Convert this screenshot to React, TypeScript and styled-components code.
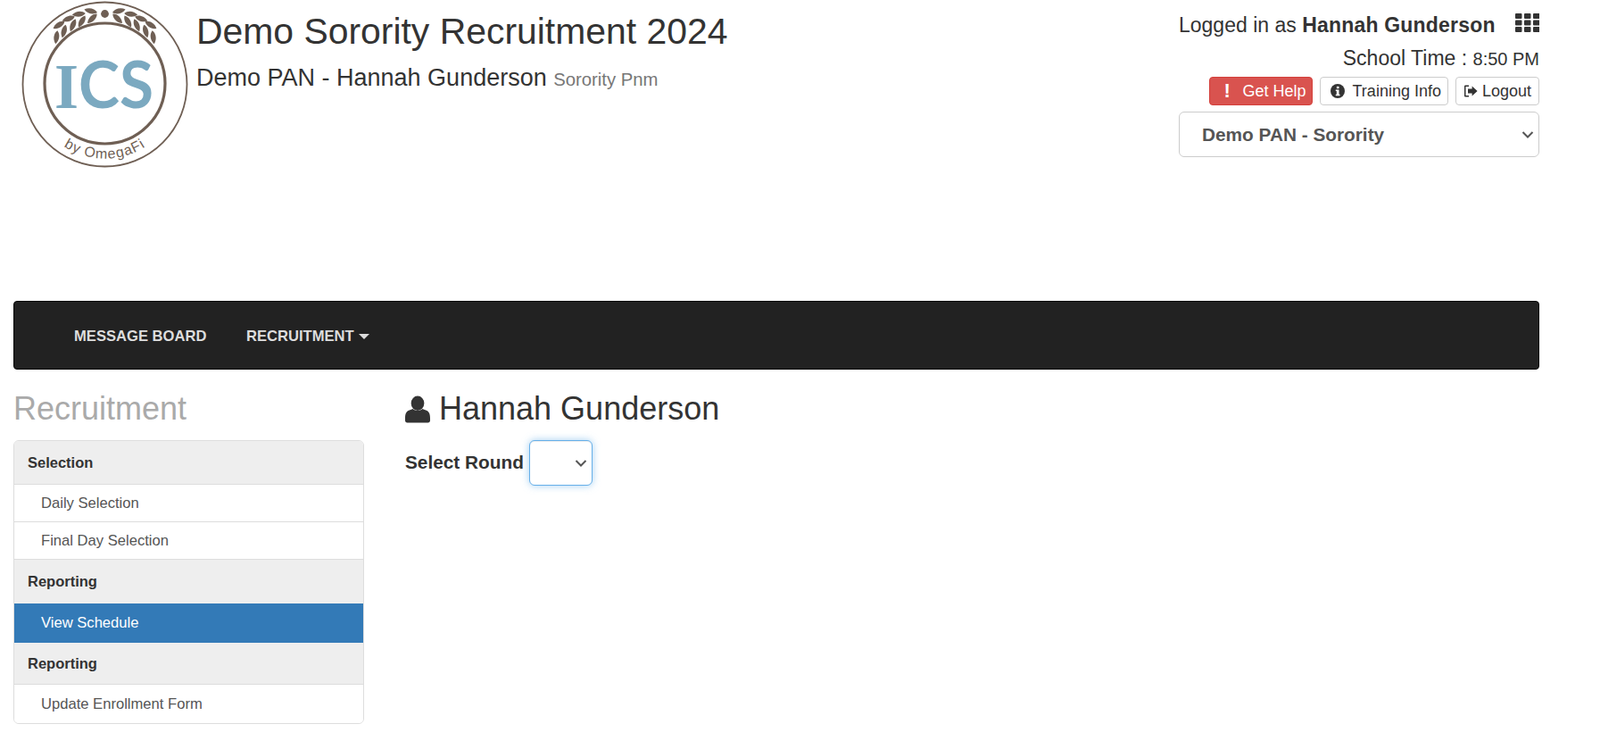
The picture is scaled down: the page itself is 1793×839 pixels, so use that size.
import styled, { createGlobalStyle } from "styled-components";

const GlobalStyle = createGlobalStyle`
  * { box-sizing: border-box; }
  body {
    margin: 0;
    background: #fff;
    color: #333;
    font-family: "Liberation Sans", Arial, sans-serif;
    font-size: 16px;
  }
`;

// one laurel leaf, centred on its middle
const LEAF = "M-7.500 0C-4-3.800 3-4 7.500 0 3 4-4 3.800-7.500 0z";

// x, y, rotation of the leaves on the right half, the left half is mirrored
const laurel = [
  [109.3, 11.3, -14],
  [122.7, 14.7, 6],
  [134.3, 20, 20],
  [145, 27, 32],
  [107.7, 19.7, 45],
  [119.3, 23, 60],
  [129.3, 27.3, 68],
  [139.3, 34, 75],
  [147.7, 40.7, 82],
];

const Logo = () => (
  <svg width="187" height="187" viewBox="0 0 187 187">
    <circle cx="93.5" cy="93.5" r="92" fill="none" stroke="#6f5f54" strokeWidth="1.8" />
    <circle cx="93.5" cy="92.5" r="67.5" fill="none" stroke="#6f5f54" strokeWidth="3.2" />
    <circle cx="93.5" cy="14.5" r="4.4" fill="#6f5f54" />
    <g fill="#6f5f54">
      {laurel.map(([x, y, r]) => (
        <g key={`${x}-${y}`}>
          <path d={LEAF} transform={`translate(${x} ${y}) rotate(${r})`} />
          <path d={LEAF} transform={`translate(${187 - x} ${y}) scale(-1 1) rotate(${r})`} />
        </g>
      ))}
    </g>
    <text x="37" y="120" fontSize="72" fontWeight="700" fill="#7ba9c0" textLength="111" lengthAdjust="spacingAndGlyphs">
      <tspan fontFamily="'Liberation Serif', serif">I</tspan>
      <tspan fontFamily="Lato, 'Liberation Sans', sans-serif">CS</tspan>
    </text>
    <path id="logoArc" d="M29.500 147A84 84 0 0 0 157.500 147" fill="none" />
    <text fontFamily="'Liberation Sans', sans-serif" fontSize="16" fill="#6f5f54" letterSpacing="1">
      <textPath href="#logoArc" startOffset="50%" textAnchor="middle">by OmegaFi</textPath>
    </text>
  </svg>
);

const GridIcon = () => (
  <svg width="27" height="21" viewBox="0 0 27 21" fill="#333">
    {[0, 7.5, 15].map((y) =>
      [0, 10, 20].map((x) => <rect key={`${x}-${y}`} x={x} y={y} width="7.5" height="6" rx="1" />)
    )}
  </svg>
);

const InfoIcon = () => (
  <svg width="16" height="16" viewBox="0 0 16 16">
    <circle cx="8" cy="8" r="8" fill="#333" />
    <rect x="6.9" y="2.8" width="2.6" height="2.4" fill="#fff" />
    <path d="M5.8 6.6h3.7v5.2h1v1.4H5.8v-1.4h1V8h-1z" fill="#fff" />
  </svg>
);

const LogoutIcon = () => (
  <svg width="16" height="14" viewBox="0 0 16 14" fill="#333">
    <path d="M1 1.6C1 .8 1.6.4 2.3.4H6v1.5H2.8c-.2 0-.3.1-.3.3v9.6c0 .2.1.3.3.3H6v1.5H2.3c-.7 0-1.3-.5-1.3-1.2z" />
    <path d="M5 4.6h4.6V1.4L15.6 7l-6 5.6V9.4H5z" />
  </svg>
);

const UserIcon = () => (
  <svg width="28" height="31" viewBox="0 0 29 31" fill="#333">
    <ellipse cx="14.5" cy="8.5" rx="7.6" ry="8.5" />
    <path d="M0 26c0-5 1-8 5-9.500l4-1.500c3 2.800 8 2.800 11 0l4 1.500c4 1.500 5 4.500 5 9.500v2.500c0 1.500-1 2.500-2.500 2.500h-24C1 31 0 30 0 28.500z" />
  </svg>
);

const Chevron = () => (
  <ChevronMark width="14" height="8" viewBox="0 0 14 8">
    <path d="M1.500 1l5.500 5.500L12.500 1" fill="none" stroke="#555" strokeWidth="2" />
  </ChevronMark>
);

const App = () => (
  <Page>
    <GlobalStyle />
    <Header>
      <LogoWrap>
        <Logo />
      </LogoWrap>
      <Titles>
        <Title>Demo Sorority Recruitment 2024</Title>
        <Subtitle>
          Demo PAN - Hannah Gunderson <small>Sorority Pnm</small>
        </Subtitle>
      </Titles>
      <Account>
        <LoggedRow>
          <span>
            Logged in as <b>Hannah Gunderson</b>
          </span>
          <GridIcon />
        </LoggedRow>
        <SchoolTime>
          School Time : <small>8:50 PM</small>
        </SchoolTime>
        <Buttons>
          <HelpButton>
            <Bang>!</Bang>
            Get Help
          </HelpButton>
          <ToolButton $gap={9} $left={11} $right={7}>
            <InfoIcon />
            Training Info
          </ToolButton>
          <ToolButton $gap={5} $left={8} $right={8}>
            <LogoutIcon />
            Logout
          </ToolButton>
        </Buttons>
        <SelectBox>
          <ChapterSelect defaultValue="demo">
            <option value="demo">Demo PAN - Sorority</option>
          </ChapterSelect>
          <Chevron />
        </SelectBox>
      </Account>
    </Header>

    <Navbar>
      <NavLink>MESSAGE BOARD</NavLink>
      <NavLink>
        RECRUITMENT <Caret />
      </NavLink>
    </Navbar>

    <Columns>
      <Sidebar>
        <SideTitle>Recruitment</SideTitle>
        <Menu>
          <MenuHeading $height={49}>Selection</MenuHeading>
          <MenuItem $height={42}>Daily Selection</MenuItem>
          <MenuItem $height={42}>Final Day Selection</MenuItem>
          <MenuHeading $height={50}>Reporting</MenuHeading>
          <MenuItem $height={44} $active>View Schedule</MenuItem>
          <MenuHeading $height={47}>Reporting</MenuHeading>
          <MenuItem $height={43} $last>Update Enrollment Form</MenuItem>
        </Menu>
      </Sidebar>
      <Main>
        <PersonName>
          <UserIcon />
          Hannah Gunderson
        </PersonName>
        <RoundRow>
          <RoundLabel>Select Round</RoundLabel>
          <SelectBox>
            <RoundSelect />
            <Chevron />
          </SelectBox>
        </RoundRow>
      </Main>
    </Columns>
  </Page>
);

export default App;

const Page = styled.div`
  width: 100%;
  min-height: 839px;
  padding: 0 68px 0 15px;
`;

const Header = styled.header`
  display: flex;
  height: 337px;
`;

const LogoWrap = styled.div`
  width: 205px;
  padding: 1px 0 0 9px;
  flex: none;
`;

const Titles = styled.div`
  flex: 1;
  padding-top: 13px;
`;

const Title = styled.h1`
  margin: 0;
  font-size: 40.900px;
  line-height: 44px;
  font-weight: 400;
`;

const Subtitle = styled.h3`
  margin: 15px 0 0;
  font-size: 27px;
  line-height: 30px;
  font-weight: 400;

  small {
    font-size: 20.300px;
    color: #777;
  }
`;

const Account = styled.div`
  width: 404px;
  flex: none;
`;

const LoggedRow = styled.div`
  display: flex;
  justify-content: space-between;
  align-items: flex-start;
  height: 46px;
  padding-top: 15px;
  font-size: 23px;
  line-height: 26px;

  b {
    letter-spacing: 0.2px;
  }
`;

const SchoolTime = styled.div`
  text-align: right;
  font-size: 23px;
  line-height: 26px;
  height: 40px;
  padding-top: 6px;

  small {
    font-size: 20px;
  }
`;

const Buttons = styled.div`
  display: flex;
  justify-content: flex-end;
  gap: 8px;
`;

const HelpButton = styled.button`
  display: flex;
  align-items: center;
  height: 32px;
  width: 116px;
  padding: 0 0 0 14px;
  border: 1px solid #d43f3a;
  border-radius: 4px;
  background: #d9534f;
  color: #fff;
  font-family: inherit;
  font-size: 18px;
`;

const Bang = styled.span`
  width: 11px;
  margin-right: 12px;
  text-align: center;
  font-weight: 700;
  font-size: 22px;
`;

const ToolButton = styled.button<{ $gap: number; $left: number; $right: number }>`
  display: flex;
  align-items: center;
  gap: ${(p) => p.$gap}px;
  height: 32px;
  padding: 0 ${(p) => p.$right}px 0 ${(p) => p.$left}px;
  border: 1px solid #ccc;
  border-radius: 4px;
  background: #fff;
  color: #333;
  font-family: inherit;
  font-size: 18px;
`;

const SelectBox = styled.div`
  position: relative;
  display: block;
`;

const ChevronMark = styled.svg`
  position: absolute;
  right: 6px;
  top: 50%;
  margin-top: -4px;
  pointer-events: none;
`;

const ChapterSelect = styled.select`
  display: block;
  appearance: none;
  width: 100%;
  height: 51px;
  margin-top: 7px;
  padding: 0 25px;
  border: 1px solid #ccc;
  border-radius: 6px;
  background: #fff;
  color: #555;
  font-family: inherit;
  font-size: 20.800px;
  font-weight: 700;
`;

const Navbar = styled.nav`
  display: flex;
  align-items: center;
  gap: 44.500px;
  height: 77px;
  padding: 2px 0 0 67px;
  border: 1px solid #080808;
  border-radius: 4px;
  background: #222;
`;

const NavLink = styled.a`
  color: #ddd;
  font-size: 16.600px;
  font-weight: 700;
`;

const Caret = styled.span`
  display: inline-block;
  margin-left: 1px;
  vertical-align: middle;
  border-top: 6px solid #ddd;
  border-left: 6px solid transparent;
  border-right: 6px solid transparent;
`;

const Columns = styled.div`
  display: flex;
  gap: 46px;
`;

const Sidebar = styled.aside`
  width: 393px;
  flex: none;
`;

const SideTitle = styled.h2`
  margin: 24px 0 0;
  height: 55px;
  font-size: 36px;
  line-height: 40px;
  font-weight: 400;
  color: #aaa;
`;

const Menu = styled.div`
  border: 1px solid #ddd;
  border-radius: 6px;
  overflow: hidden;
`;

const MenuHeading = styled.div<{ $height: number }>`
  height: ${(p) => p.$height}px;
  padding-left: 15px;
  display: flex;
  align-items: center;
  background: #eee;
  border-bottom: 1px solid #ddd;
  color: #333;
  font-size: 16.500px;
  font-weight: 700;
`;

const MenuItem = styled.a<{ $height: number; $active?: boolean; $last?: boolean }>`
  display: flex;
  align-items: center;
  height: ${(p) => p.$height}px;
  margin: ${(p) => (p.$active ? "-1px -1px 0" : "0")};
  padding-left: ${(p) => (p.$active ? 31 : 30)}px;
  background: ${(p) => (p.$active ? "#337ab7" : "#fff")};
  color: ${(p) => (p.$active ? "#fff" : "#555")};
  border-bottom: ${(p) => (p.$active || p.$last ? "none" : "1px solid #ddd")};
  font-size: 16.600px;
`;

const Main = styled.main`
  flex: 1;
`;

const PersonName = styled.h2`
  display: flex;
  align-items: center;
  gap: 10px;
  margin: 24px 0 0;
  height: 40px;
  font-size: 36px;
  line-height: 40px;
  font-weight: 400;
  color: #333;
`;

const RoundRow = styled.div`
  display: flex;
  align-items: center;
  gap: 6px;
  margin-top: 15px;
`;

const RoundLabel = styled.label`
  font-size: 20.800px;
  font-weight: 700;
  margin-top: -2px;
`;

const RoundSelect = styled.select`
  display: block;
  appearance: none;
  width: 71px;
  height: 51px;
  border: 1px solid #66afe9;
  border-radius: 6px;
  background: #fff;
  color: #555;
  box-shadow: inset 0 1px 1px rgba(0, 0, 0, 0.075), 0 0 8px rgba(102, 175, 233, 0.6);
  outline: none;
`;
